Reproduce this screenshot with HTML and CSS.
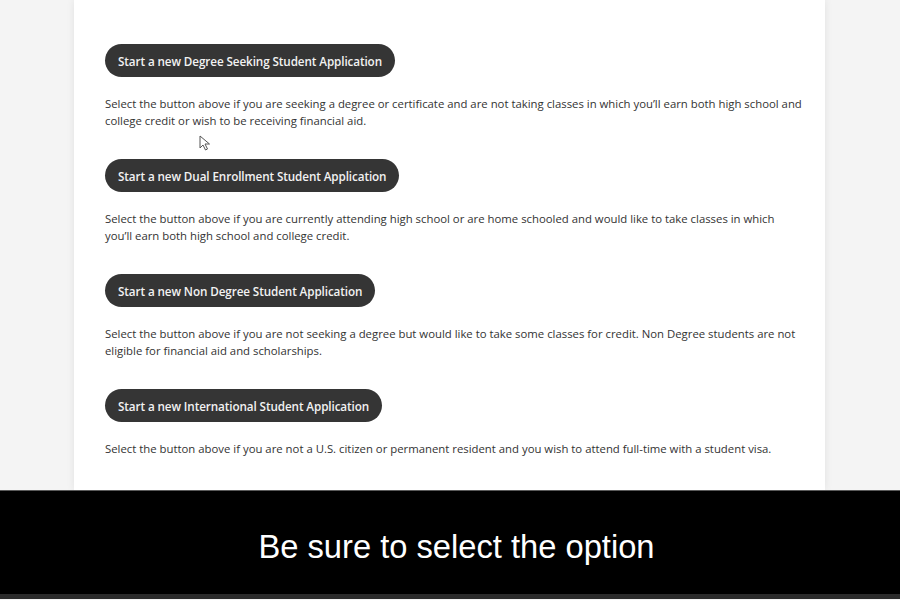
FILE: index.html
```html
<!DOCTYPE html>
<html lang="en">
<head>
<meta charset="utf-8">
<title>Start an Application</title>
<link rel="stylesheet" href="styles.css">
</head>
<body>
<div class="page">
  <div class="stage">
    <main class="card">
      <section class="option">
        <button class="start-btn">Start a new Degree Seeking Student Application</button>
        <p class="desc">Select the button above if you are seeking a degree or certificate and are not taking classes in which you’ll earn both high school and college credit or wish to be receiving financial aid.</p>
      </section>
      <section class="option">
        <button class="start-btn">Start a new Dual Enrollment Student Application</button>
        <p class="desc">Select the button above if you are currently attending high school or are home schooled and would like to take classes in which you’ll earn both high school and college credit.</p>
      </section>
      <section class="option">
        <button class="start-btn">Start a new Non Degree Student Application</button>
        <p class="desc">Select the button above if you are not seeking a degree but would like to take some classes for credit. Non Degree students are not eligible for financial aid and scholarships.</p>
      </section>
      <section class="option">
        <button class="start-btn">Start a new International Student Application</button>
        <p class="desc">Select the button above if you are not a U.S. citizen or permanent resident and you wish to attend full-time with a student visa.</p>
      </section>
    </main>
    <svg class="cursor" width="12" height="16" viewBox="0 0 12 16" aria-hidden="true">
      <path d="M1 1 L1 13 L4 10 L6.5 15 L8.5 14 L6 9 L10.5 9 Z" fill="#fff" stroke="#555" stroke-width="1" stroke-linejoin="round"/>
    </svg>
  </div>
  <div class="caption">Be sure to select the option</div>
  <div class="strip"></div>
</div>
</body>
</html>
```
FILE: styles.css
```css
html, body {
  margin: 0;
  padding: 0;
}
body {
  background: #f4f4f4;
  width: 900px;
  height: 600px;
  overflow: hidden;
}
.page {
  display: flex;
  flex-direction: column;
  height: 600px;
}
.stage {
  position: relative;
  height: 490px;
  overflow: hidden;
  display: flex;
  padding-left: 74px;
}
.card {
  width: 751px;
  box-sizing: border-box;
  background: #fff;
  box-shadow: 0 0 8px rgba(0, 0, 0, 0.08);
  padding: 44px 20px 0 31px;
  display: flex;
  flex-direction: column;
  gap: 30px;
}
.option {
  display: flex;
  flex-direction: column;
  align-items: flex-start;
  gap: 18px;
}
.start-btn {
  height: 33px;
  padding: 0 13px;
  border: 0;
  border-radius: 17px;
  background: #353535;
  color: #f2f2f2;
  font-family: "Open Sans", sans-serif;
  font-size: 11.7px;
  font-weight: 600;
  letter-spacing: -0.1px;
}
.desc {
  margin: 0;
  max-width: 698px;
  font-family: "Open Sans", sans-serif;
  font-size: 11.35px;
  line-height: 17px;
  color: #333;
}
.cursor {
  position: absolute;
  left: 199px;
  top: 135px;
}
.caption {
  height: 104px;
  box-sizing: border-box;
  padding: 8px 0 0 13px;
  border-top: 1px solid #5a5a5a;
  background: #000;
  color: #fff;
  font-family: "Liberation Sans", Arial, sans-serif;
  font-size: 32.7px;
  display: flex;
  align-items: center;
  justify-content: center;
}
.strip {
  height: 5px;
  background: #2b2b2b;
}
```
